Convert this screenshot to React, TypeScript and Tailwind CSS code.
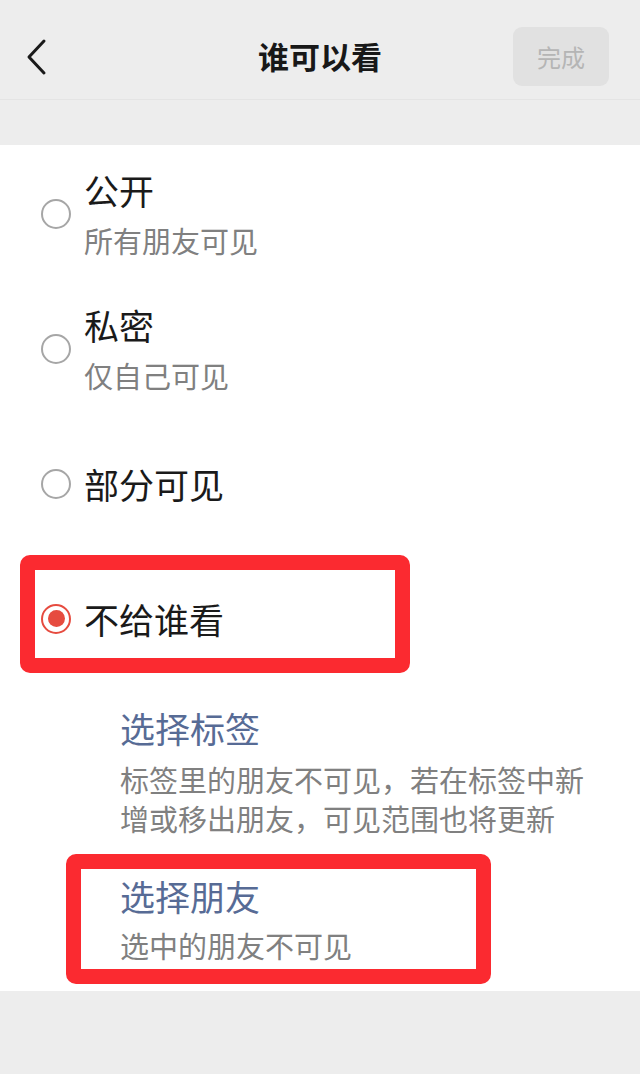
const font = { fontFamily: '"Noto Sans CJK SC", "Noto Sans", sans-serif' };

function Radio({ checked }: { checked?: boolean }) {
  if (checked) {
    return (
      <span className="flex h-[30px] w-[30px] shrink-0 items-center justify-center rounded-full border-2 border-[#e64b3f]">
        <span className="h-[17px] w-[17px] rounded-full bg-[#e64b3f]" />
      </span>
    );
  }
  return <span className="h-[30px] w-[30px] shrink-0 rounded-full border-2 border-[#a6a6a6]" />;
}

interface OptionProps {
  title: string;
  desc?: string;
  checked?: boolean;
}

function Option({ title, desc, checked }: OptionProps) {
  return (
    <div className="flex h-[135px] items-center pl-[41px]">
      <Radio checked={checked} />
      <div className="ml-[13px] flex flex-col">
        <span className="text-[35px] leading-[44px] text-[#1a1a1a]">{title}</span>
        {desc && <span className="mt-[8px] text-[29px] leading-[40px] text-[#808080]">{desc}</span>}
      </div>
    </div>
  );
}

export default function App() {
  return (
    <div className="flex min-h-[1074px] w-[640px] flex-col bg-[#ededed]" style={font}>
      <div className="relative flex h-[100px] items-center justify-center border-b border-[#e4e4e4] pt-[12px]">
        <svg className="absolute left-[24px] top-[38px]" width="26" height="38" viewBox="0 0 26 38" fill="none">
          <path d="M20 3 L5 19 L20 35" stroke="#1a1a1a" strokeWidth="3" strokeLinecap="round" strokeLinejoin="round" />
        </svg>
        <span className="text-[31px] font-semibold leading-none text-[#181818]">谁可以看</span>
        <button className="absolute right-[31px] top-[27px] flex h-[59px] w-[96px] items-center justify-center rounded-[9px] bg-[#e1e1e1] text-[24px] text-[#b5b5b5]">
          完成
        </button>
      </div>

      <div className="relative mt-[45px] flex flex-col bg-white pt-[1px] pb-[26px]">
        <Option title="公开" desc="所有朋友可见" />
        <Option title="私密" desc="仅自己可见" />
        <Option title="部分可见" />
        <Option title="不给谁看" checked />

        <div className="flex flex-col pl-[120px] pr-[30px] pt-[20px]">
          <span className="text-[35px] leading-[44px] text-[#576b95]">选择标签</span>
          <p className="mt-[10px] text-[29px] leading-[39px] text-[#808080]">
            标签里的朋友不可见，若在标签中新
            <br />
            增或移出朋友，可见范围也将更新
          </p>
          <span className="mt-[36px] text-[35px] leading-[44px] text-[#576b95]">选择朋友</span>
          <span className="mt-[8px] text-[29px] leading-[39px] text-[#808080]">选中的朋友不可见</span>
        </div>

        <div className="pointer-events-none absolute left-[20px] top-[410px] h-[118px] w-[390px] rounded-[10px] border-[15px] border-[#fb2a30]" />
        <div className="pointer-events-none absolute left-[66px] top-[709px] h-[130px] w-[425px] rounded-[10px] border-[15px] border-[#fb2a30]" />
      </div>
    </div>
  );
}
